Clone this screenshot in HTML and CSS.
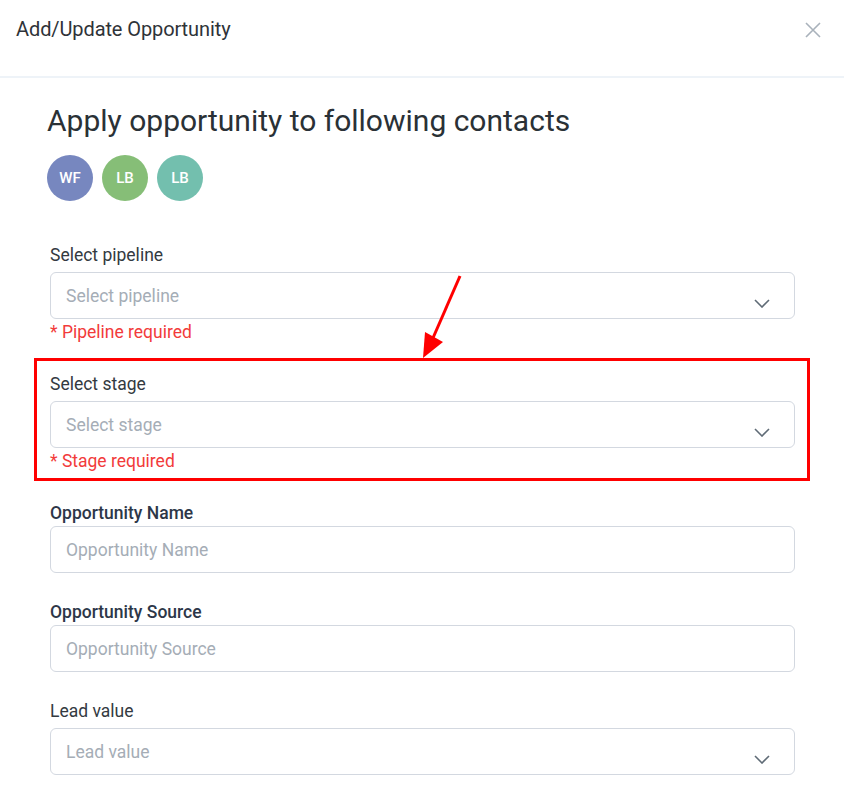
FILE: index.html
```html
<!DOCTYPE html>
<html lang="en">
<head>
    <meta charset="UTF-8">
    <meta name="viewport" content="width=device-width, initial-scale=1.0">
    <title>Add/Update Opportunity</title>
    <link rel="stylesheet" href="styles.css">
</head>
<body>
    <div class="modal">
        <div class="modal-header">
            <h1>Add/Update Opportunity</h1>
            <button class="close-btn" aria-label="Close">
                <svg width="18" height="18" viewBox="0 0 18 18"><path d="M2 2 L16 16 M16 2 L2 16" stroke="#a9b2bb" stroke-width="1.6" fill="none"/></svg>
            </button>
        </div>

        <div class="modal-body">
            <h2>Apply opportunity to following contacts</h2>
            <div class="avatars">
                <span class="avatar avatar-blue">WF</span>
                <span class="avatar avatar-green">LB</span>
                <span class="avatar avatar-teal">LB</span>
            </div>

            <div class="form">
                <div class="field">
                    <label>Select pipeline</label>
                    <div class="select">
                        <span class="placeholder">Select pipeline</span>
                        <svg class="chevron" width="16" height="9" viewBox="0 0 16 9"><path d="M1 1 L8 8 L15 1" stroke="#5f6b76" stroke-width="1.6" fill="none"/></svg>
                    </div>
                    <div class="error">* Pipeline required</div>
                </div>

                <div class="field highlighted">
                    <label>Select stage</label>
                    <div class="select">
                        <span class="placeholder">Select stage</span>
                        <svg class="chevron" width="16" height="9" viewBox="0 0 16 9"><path d="M1 1 L8 8 L15 1" stroke="#5f6b76" stroke-width="1.6" fill="none"/></svg>
                    </div>
                    <div class="error">* Stage required</div>
                </div>

                <div class="field field-input">
                    <label class="strong">Opportunity Name</label>
                    <div class="input"><span class="placeholder">Opportunity Name</span></div>
                </div>

                <div class="field field-input">
                    <label class="strong">Opportunity Source</label>
                    <div class="input"><span class="placeholder">Opportunity Source</span></div>
                </div>

                <div class="field">
                    <label>Lead value</label>
                    <div class="select">
                        <span class="placeholder">Lead value</span>
                        <svg class="chevron" width="16" height="9" viewBox="0 0 16 9"><path d="M1 1 L8 8 L15 1" stroke="#5f6b76" stroke-width="1.6" fill="none"/></svg>
                    </div>
                </div>
            </div>
        </div>

        <!-- annotation arrow pointing at the stage field -->
        <svg class="arrow" width="60" height="100" viewBox="0 0 60 100">
            <line x1="49" y1="4" x2="22" y2="66" stroke="#ff0000" stroke-width="3"/>
            <polygon points="12,86 14,60 32,70" fill="#ff0000"/>
        </svg>
    </div>
</body>
</html>
```

FILE: styles.css
```css
* {
    box-sizing: border-box;
}
body {
    margin: 0;
    font-family: Roboto, "Liberation Sans", sans-serif;
    background: #ffffff;
    color: #333a41;
}
.modal {
    position: relative;
    width: 844px;
    height: 794px;
    overflow: hidden;
}
.modal-header {
    height: 78px;
    display: flex;
    justify-content: space-between;
    align-items: flex-start;
    padding: 17px 22px 0 16px;
    border-bottom: 2px solid #eef3f8;
}
.modal-header h1 {
    margin: 0;
    font-size: 20px;
    font-weight: 400;
    line-height: 24px;
    color: #2f3338;
    letter-spacing: -0.1px;
}
.close-btn {
    background: none;
    border: none;
    padding: 0;
    margin-top: 4px;
    cursor: pointer;
}
.modal-body {
    padding: 23px 49px 0 47px;
}
.modal-body h2 {
    margin: 0;
    font-size: 30px;
    font-weight: 400;
    line-height: 40px;
    color: #2a3136;
}
.avatars {
    display: flex;
    gap: 9px;
    margin-top: 14px;
}
.avatar {
    width: 46px;
    height: 46px;
    border-radius: 50%;
    display: flex;
    align-items: center;
    justify-content: center;
    color: #ffffff;
    font-size: 15px;
    font-weight: 500;
}
.avatar-blue {
    background: #7787bf;
}
.avatar-green {
    background: #86be77;
}
.avatar-teal {
    background: #73bfae;
}
.form {
    display: flex;
    flex-direction: column;
    gap: 32px;
    margin-top: 44px;
    padding-left: 3px;
}
.field {
    position: relative;
}
.field-input + .field-input,
.field-input + .field {
    margin-top: -3px;
}
.field label {
    display: block;
    font-size: 17.5px;
    line-height: 20px;
    color: #333a41;
    margin-bottom: 7px;
}
.field label.strong {
    font-weight: 500;
    color: #2d3748;
    margin-bottom: 3px;
}
.select,
.input {
    height: 47px;
    border: 1px solid #d3d8e0;
    border-radius: 6px;
    display: flex;
    align-items: center;
    padding: 0 16px 0 15px;
    position: relative;
}
.placeholder {
    font-size: 17.5px;
    color: #a5adb6;
}
.chevron {
    position: absolute;
    right: 24px;
    top: 26px;
}
.error {
    font-size: 17.5px;
    line-height: 20px;
    color: #f23b3b;
    margin-top: 3px;
}
.highlighted::before {
    content: "";
    position: absolute;
    top: -16px;
    left: -16px;
    right: -15px;
    bottom: -10px;
    border: 3px solid #ff0000;
    pointer-events: none;
}
.arrow {
    position: absolute;
    left: 411px;
    top: 272px;
}
```
